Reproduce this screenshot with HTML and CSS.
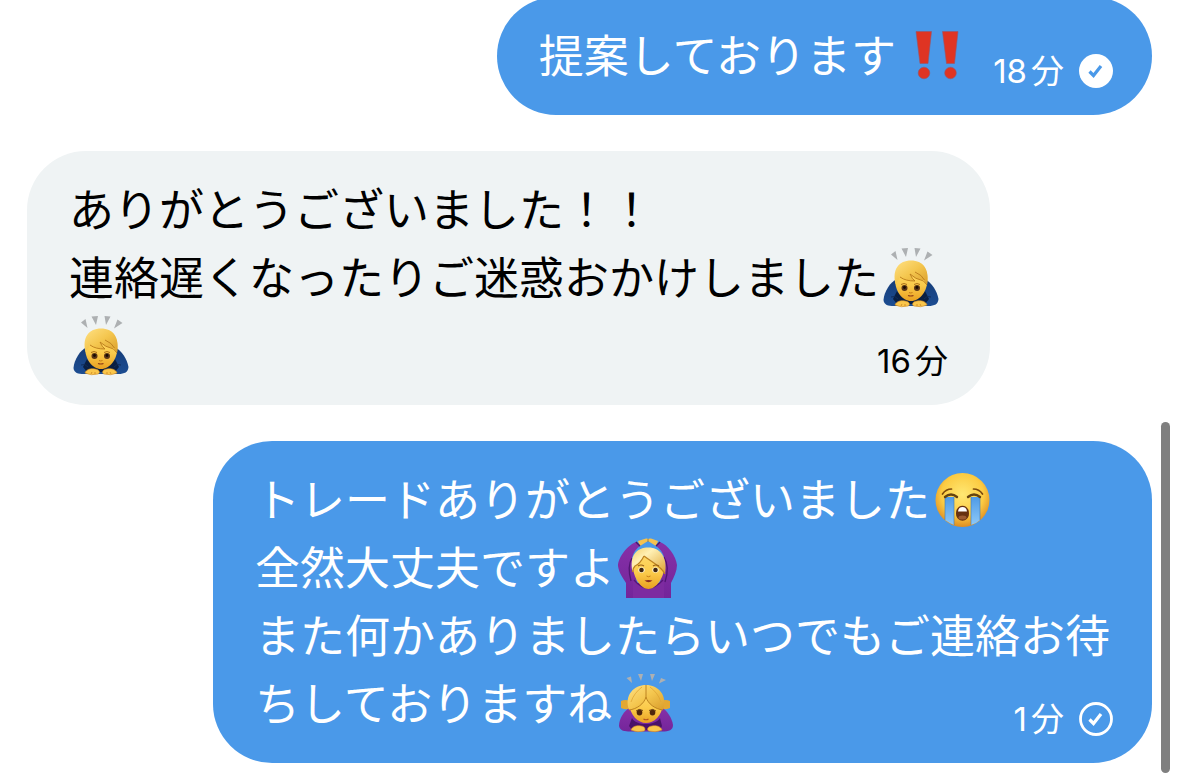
FILE: index.html
```html
<!DOCTYPE html>
<html lang="ja">
<head>
  <meta charset="UTF-8" />
  <meta name="viewport" content="width=device-width, initial-scale=1.0" />
  <title>メッセージ</title>
  <link rel="stylesheet" href="styles.css">
</head>
<body>

  <!-- shared emoji and icons -->
  <svg class="sprite" aria-hidden="true">
    <defs>
      <linearGradient id="skin" x1="0" y1="0" x2="0" y2="1">
        <stop offset="0" stop-color="#ffdd74" />
        <stop offset="0.6" stop-color="#fbcb4b" />
        <stop offset="1" stop-color="#e9a020" />
      </linearGradient>
      <linearGradient id="hair" x1="0" y1="0" x2="1" y2="1">
        <stop offset="0" stop-color="#ffe184" />
        <stop offset="0.5" stop-color="#f4c64e" />
        <stop offset="1" stop-color="#d99d2c" />
      </linearGradient>
      <linearGradient id="blond" x1="0" y1="0" x2="1" y2="1">
        <stop offset="0" stop-color="#f5d06c" />
        <stop offset="0.35" stop-color="#fff0b4" />
        <stop offset="1" stop-color="#dda12f" />
      </linearGradient>
      <radialGradient id="face" cx="0.5" cy="0.4" r="0.6">
        <stop offset="0" stop-color="#ffe873" />
        <stop offset="0.65" stop-color="#fccb42" />
        <stop offset="1" stop-color="#dd8c22" />
      </radialGradient>
      <linearGradient id="navy" x1="0" y1="0" x2="0" y2="1">
        <stop offset="0" stop-color="#163c78" />
        <stop offset="1" stop-color="#1c4d92" />
      </linearGradient>
      <linearGradient id="purple" x1="0" y1="0" x2="0" y2="1">
        <stop offset="0" stop-color="#8630a8" />
        <stop offset="1" stop-color="#74259a" />
      </linearGradient>
      <linearGradient id="tear" x1="0" y1="0" x2="0" y2="1">
        <stop offset="0" stop-color="#4f9be6" />
        <stop offset="1" stop-color="#8cc8f8" />
      </linearGradient>
    </defs>

    <symbol id="bangbang" viewBox="0 0 60 60" overflow="visible">
      <g fill="#df3423" stroke="#96566a" stroke-width="0.6">
        <path d="M10 5.5H25.5L22 37.5H14Z" />
        <circle cx="18" cy="47" r="5.8" />
        <path d="M36.5 5.5H52L48.5 37.5H40.5Z" />
        <circle cx="44.5" cy="47" r="5.8" />
      </g>
    </symbol>

    <symbol id="bow-man" viewBox="0 0 60 60" overflow="visible">
      <path d="M12 6.5L16.5 3L18.5 12ZM22.5 0.5L29 0L27 9ZM35.500 0L41.5 0.5L37 9ZM48.5 3.5L53.5 7L45 12.5Z" fill="#adb0b2" />
      <path d="M18 31C11 34 5 44 4.5 52C5 57 9 58 15 58H49C56 58 59 56 59.5 51C58 43 53 35 46 31Z" fill="url(#navy)" />
      <path d="M18 43C21 50 43 50 46 43L50 51L46 56H18L14 51Z" fill="#0a1f42" />
      <path d="M12 49Q16 47 19 51M52 49Q48 47 45 51" fill="none" stroke="#102c58" stroke-width="1" />
      <path d="M16 31C16 19 22 13 32 13C42 13 48.5 19 48.5 31C48.5 43 41 53 32 53C23 53 16 43 16 31Z" fill="url(#skin)" />
      <path d="M16.5 36C13 21 20 12.500 32 12.500C44 12.500 51 21 48 37C46.500 35 46 34 44.500 32Q37 32 31 26Q32 30 36 33C29 33 24 31 21 29Q19 33 16.500 36Z" fill="url(#hair)" />
      <path d="M31 26Q36 31 44.500 33L48 37M36 24Q43 27 45.500 32M21 29C25 32 30 33 36 33Q33 31 31 26" fill="none" stroke="#ba7c1b" stroke-width="0.900" />
      <path d="M22 36.500Q25 34.500 28 36.500M35 36.500Q38 34.500 41 36.500" fill="none" stroke="#ac701a" stroke-width="1" />
      <ellipse cx="25.500" cy="40" rx="3" ry="2.900" fill="#5b3516" />
      <ellipse cx="38" cy="40" rx="3" ry="2.900" fill="#5b3516" />
      <circle cx="25.500" cy="39.500" r="1.400" fill="#170b03" />
      <circle cx="38" cy="39.500" r="1.400" fill="#170b03" />
      <path d="M30 44.500Q31.750 45.500 33.500 44.500" fill="none" stroke="#c57e19" stroke-width="1" />
      <path d="M29 47.500Q31.750 48.500 34.500 47.500" fill="none" stroke="#8d3b17" stroke-width="1.200" />
      <path d="M16 57C17 53 23 52 26 53C30 53 32 57 29 58Q22 60 16 57ZM48 57C47 53 41 52 38 53C34 53 32 57 35 58Q42 60 48 57Z" fill="#fac64b" stroke="#d18b22" stroke-width="0.600" />
      <path d="M22 58L23 56M26 58V56M38 58V56M42 58L41 56" stroke="#c47d1c" stroke-width="0.700" />
    </symbol>

    <symbol id="bow-woman" viewBox="0 0 60 60" overflow="visible">
      <path d="M14.500 4L19 2.500L20 9ZM26 0L31 0L29 7ZM38 0L43 0L40 7ZM49 4L54 6L47 9.500Z" fill="#adb0b2" />
      <path d="M9 27Q13 25 18 27V35Q13 36 9 34ZM58 27Q54 25 49 27V35Q54 36 58 34Z" fill="#e3a832" />
      <path d="M18 34C12 36 7 45 7 52C8 57 13 57.500 18 57.500H50C57 57.500 61 56 61 51C60 44 55 36 50 34Z" fill="url(#purple)" />
      <path d="M20 44C24 52 43 52 48 44L50 52L48 56H20L17 52Z" fill="#4a1269" />
      <path d="M17 30C17 18 24 12 34 12C44 12 51 19 51 30C50 42 42 49 34 49C26 49 18 41 17 30Z" fill="url(#skin)" />
      <path d="M34 23C32 30 25 35 17 36C12 21 22 11 34 11C46 11 56 21 51 36C43 35 36 30 34 23Z" fill="url(#hair)" />
      <path d="M34 11V23C32 30 25 35 17 36M34 23C36 30 43 35 51 36" fill="none" stroke="#b77c1b" stroke-width="0.900" />
      <path d="M30 13Q22 19 19 28M38 13Q46 19 49 28" fill="none" stroke="#e0a534" stroke-width="0.800" />
      <ellipse cx="27.500" cy="38.500" rx="2.800" ry="2.900" fill="#50260c" />
      <ellipse cx="40.500" cy="38.500" rx="2.800" ry="2.900" fill="#50260c" />
      <path d="M24 37Q27 34 31 36.500M37 36.500Q41 34 44 37" fill="none" stroke="#694014" stroke-width="0.900" />
      <path d="M31.500 45Q34 46.500 36.500 45" fill="none" stroke="#b35221" stroke-width="1.200" />
      <path d="M19 56C20 52 26 51 29 52C33 52 34 56 32 57Q25 59 19 56ZM50 56C49 52 43 51 40 52C36 52 34 56 37 57Q44 59 50 56Z" fill="#fac64b" stroke="#d18b22" stroke-width="0.600" />
    </symbol>

    <symbol id="ok-woman" viewBox="0 0 60 60" overflow="visible">
      <path d="M23 3L31 0.500Q34 0 33 3L25 8ZM43 3L36 0.500Q32 0 33 3L41 8Z" fill="#f5c24f" />
      <path d="M33 1V4" stroke="#ae7422" stroke-width="0.800" />
      <path d="M21 4C13 7 3 19 3 28C4 35 8 40 11 45V60H56V45C59 39 62 33 62 27C61 18 53 7 45 4L41 8Q47 12 49 19L45 45H22L17 20Q19 12 25 8Z" fill="url(#purple)" />
      <path d="M17 20Q12 28 16 43M49 19Q55 29 50 44" fill="none" stroke="#501571" stroke-width="1.300" />
      <path d="M21 4L25 8M45 4L41 8" stroke="#4b156a" stroke-width="1.500" />
      <path d="M18 42Q33 58 49 42V60H18Z" fill="#7d2ba0" />
      <path d="M19 42Q33 58 48 42" fill="none" stroke="#551577" stroke-width="1.200" />
      <path d="M17.500 26C17 16 24 10 33.500 10C43 10 50 17 49.500 28C49 40 41 51 33.500 51C26 51 18 40 17.500 26Z" fill="url(#skin)" />
      <path d="M17.500 34C14 17 22 9.500 33.500 9.500C45 9.500 53 19 50 36C46 28 38 25 29 18Q25 26 20 28Q18 30 17.500 34Z" fill="url(#blond)" />
      <path d="M29 18C38 25 46 28 50 36M29 18Q25 26 20 28Q18 30 17.500 34" fill="none" stroke="#bd8220" stroke-width="1.200" />
      <path d="M23 28Q26 26 29 28M38 28Q41 26 44 28" fill="none" stroke="#9a6116" stroke-width="1.200" />
      <ellipse cx="26.500" cy="32" rx="3.200" ry="2.700" fill="#fff7dd" />
      <ellipse cx="40.500" cy="32" rx="3.200" ry="2.700" fill="#fff7dd" />
      <circle cx="26.500" cy="32" r="2.300" fill="#3e240f" />
      <circle cx="40.500" cy="32" r="2.300" fill="#3e240f" />
      <path d="M31.500 38Q33.500 39.500 35.500 38" fill="none" stroke="#c77f19" stroke-width="1" />
      <path d="M29.500 42.500Q33.500 41.500 37.500 42.500Q33.500 46 29.500 42.500Z" fill="#8b2d21" />
    </symbol>

    <symbol id="crying" viewBox="0 0 60 60" overflow="visible">
      <circle cx="32.500" cy="30" r="27" fill="url(#face)" />
      <path d="M15 27H24V55Q19 53 15 50ZM41 27H50V50Q46 54 41 55Z" fill="url(#tear)" />
      <path d="M15 27V50M24 27V55M41 27V55M50 27V50" fill="none" stroke="#4478ae" stroke-width="0.600" />
      <path d="M15 27Q21 22 27 27M38 27Q44 22 50 27" fill="none" stroke="#65430e" stroke-width="2.400" stroke-linecap="round" />
      <path d="M12.500 24Q16 19 21.500 19M43.500 19Q49 19 52.500 24" fill="none" stroke="#7d4b0d" stroke-width="1.700" stroke-linecap="round" />
      <path d="M26 43.500C26 33 39 33 39 43.500C39 53 26 53 26 43.500Z" fill="#673110" />
      <path d="M28 41.500Q28.500 37 32.500 37Q36.500 37 37 41.500Z" fill="#fff" />
      <ellipse cx="32.500" cy="47.500" rx="4" ry="2" fill="#9b5a31" />
    </symbol>

    <symbol id="seen" viewBox="0 0 34 34">
      <circle cx="17" cy="17" r="17" fill="#fff" />
      <path d="M10.500 17.500L14.500 21.500L22 12" fill="none" stroke="#4a99e9" stroke-width="3.200" />
    </symbol>

    <symbol id="sent" viewBox="0 0 34 34">
      <circle cx="17" cy="17" r="15.500" fill="none" stroke="#fff" stroke-width="2.800" />
      <path d="M10.500 17.500L14.500 21.500L22 12" fill="none" stroke="#fff" stroke-width="3.200" />
    </symbol>
  </svg>

  <main class="chat">
    <div class="bubble mine">
      <p>提案しております <svg class="emoji"><use href="#bangbang" /></svg><span class="meta"><time>18<span class="unit">分</span></time><svg class="status"><use href="#seen" /></svg></span></p>
    </div>

    <div class="bubble theirs">
      <p>ありがとうございました！！<br>連絡遅くなったりご迷惑おかけしました<svg class="emoji"><use href="#bow-man" /></svg><wbr><svg class="emoji"><use href="#bow-man" /></svg><span class="meta"><time>16<span class="unit">分</span></time></span></p>
    </div>

    <div class="bubble mine">
      <p>トレードありがとうございました<svg class="emoji"><use href="#crying" /></svg><br>全然大丈夫ですよ<svg class="emoji"><use href="#ok-woman" /></svg><br>また何かありましたらいつでもご連絡お待<br>ちしておりますね<svg class="emoji"><use href="#bow-woman" /></svg><span class="meta"><time>1<span class="unit">分</span></time><svg class="status"><use href="#sent" /></svg></span></p>
    </div>
  </main>

  <div class="scrollbar"></div>

</body>
</html>
```
FILE: styles.css
```css
* {
  margin: 0;
  padding: 0;
  box-sizing: border-box;
}
body {
  font-family: 'Noto Sans CJK JP', sans-serif;
  background-color: #fff;
  color: #000;
  overflow: hidden;
}
.sprite {
  position: absolute;
  width: 0;
  height: 0;
}
/* newest message stays at the bottom */
.chat {
  display: flex;
  flex-direction: column;
  justify-content: flex-end;
  gap: 36px;
  height: 100vh;
  padding: 0 27px 19px;
}
.bubble {
  flex-shrink: 0;
  max-width: 963px;
  padding: 23px 42px 24px;
  border-radius: 59px;
  font-size: 45px;
  line-height: 68px;
}
.bubble p {
  display: flow-root;
}
.mine {
  align-self: flex-end;
  background-color: #4a99e9;
  color: #fff;
}
.theirs {
  align-self: flex-start;
  background-color: #eff3f4;
}
.emoji {
  width: 60px;
  height: 60px;
  vertical-align: -13px;
  overflow: visible;
}
.meta {
  float: right;
  display: flex;
  align-items: center;
  gap: 15px;
  margin: 31px 0 0 27px;
  font-family: 'Inter', 'Noto Sans CJK JP', sans-serif;
  font-size: 33px;
  line-height: 40px;
}
.unit {
  margin-left: 4px;
}
.status {
  width: 34px;
  height: 34px;
  margin-right: -3px;
}
.scrollbar {
  position: absolute;
  top: 422px;
  right: 9px;
  bottom: 9px;
  width: 9px;
  border-radius: 5px;
  background-color: #7f7f7f;
}
```
